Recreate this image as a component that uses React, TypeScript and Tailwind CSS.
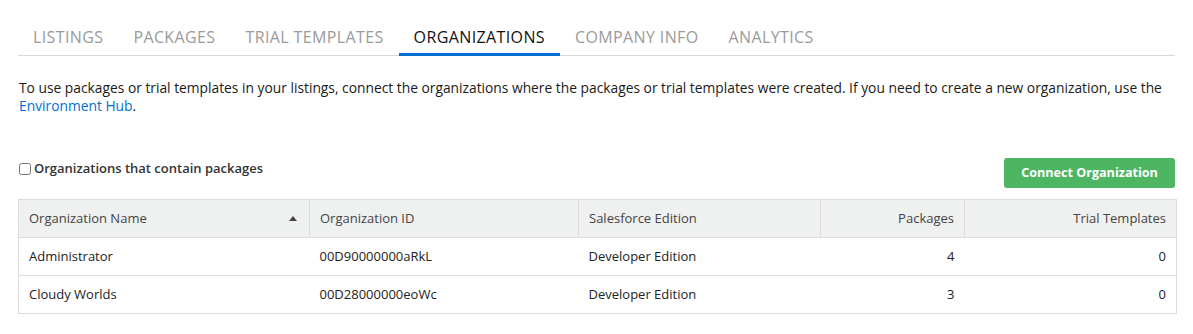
import { useState } from 'react';

const tabs = ['Listings', 'Packages', 'Trial Templates', 'Organizations', 'Company Info', 'Analytics'];

const orgs = [
  { name: 'Administrator', id: '00D90000000aRkL', edition: 'Developer Edition', packages: 4, trials: 0 },
  { name: 'Cloudy Worlds', id: '00D28000000eoWc', edition: 'Developer Edition', packages: 3, trials: 0 },
];

export default function App() {
  const [active, setActive] = useState('Organizations');
  const [onlyPackages, setOnlyPackages] = useState(false);

  return (
    <div className="bg-white w-[1193px] h-[334px] px-[18px] pt-[21px] text-[#333] font-['Open_Sans',sans-serif]">
      <div className="flex border-b border-[#d8d8d8]">
        {tabs.map((t) => (
          <button
            key={t}
            onClick={() => setActive(t)}
            className={
              'px-[15px] h-[35px] text-[16px] font-medium uppercase tracking-[0.38px] border-b-[3px] -mb-px ' +
              (active === t ? 'border-[#0070d2] text-[#111]' : 'border-transparent text-[#9a9a9a]')
            }
          >
            {t}
          </button>
        ))}
      </div>

      <p className="mt-[23px] text-[13.8px] leading-[18px] pl-px text-[#1a1a1a]">
        To use packages or trial templates in your listings, connect the organizations where the packages or trial templates were created. If you need to create a new organization, use the{' '}
        <a href="#" className="text-[#0070d2]">Environment Hub</a>.
      </p>

      <div className="mt-[43px] flex items-start justify-between">
        <label className="flex items-center gap-[3px] pl-px mt-[1px] text-[13px] font-semibold text-[#333]">
          <input
            type="checkbox"
            checked={onlyPackages}
            onChange={(e) => setOnlyPackages(e.target.checked)}
            className="w-[12px] h-[12px] rounded-[3px] accent-[#0070d2]"
          />
          Organizations that contain packages
        </label>
        <button className="w-[171px] h-[30px] rounded-[3px] bg-[#4eb562] text-white text-[12.6px] font-bold">
          Connect Organization
        </button>
      </div>

      <table className="mt-[11px] w-[1158px] table-fixed border border-[#dcdcdc] border-collapse text-[13px]">
        <colgroup>
          <col className="w-[291px]" />
          <col className="w-[269px]" />
          <col className="w-[242px]" />
          <col className="w-[144px]" />
          <col className="w-[212px]" />
        </colgroup>
        <thead>
          <tr className="bg-[#eff0f0] h-[38px] text-[#444]">
            <th className="text-left font-normal px-[10px] border-r border-b border-[#dcdcdc]">
              <div className="flex items-center justify-between">
                <span>Organization Name</span>
                <svg width="8" height="5" viewBox="0 0 8 5" className="mr-[2px]"><path d="M0 5 L4 0 L8 5 Z" fill="#444" /></svg>
              </div>
            </th>
            <th className="text-left font-normal px-[10px] border-r border-b border-[#dcdcdc]">Organization ID</th>
            <th className="text-left font-normal px-[10px] border-r border-b border-[#dcdcdc]">Salesforce Edition</th>
            <th className="text-right font-normal px-[10px] border-r border-b border-[#dcdcdc]">Packages</th>
            <th className="text-right font-normal px-[10px] border-b border-[#dcdcdc]">Trial Templates</th>
          </tr>
        </thead>
        <tbody>
          {orgs.map((o) => (
            <tr key={o.id} className="h-[38px] border-b border-[#dcdcdc] text-[#222]">
              <td className="px-[10px]">{o.name}</td>
              <td className="px-[10px]">{o.id}</td>
              <td className="px-[10px]">{o.edition}</td>
              <td className="px-[10px] text-right">{o.packages}</td>
              <td className="px-[10px] text-right">{o.trials}</td>
            </tr>
          ))}
        </tbody>
      </table>
    </div>
  );
}
